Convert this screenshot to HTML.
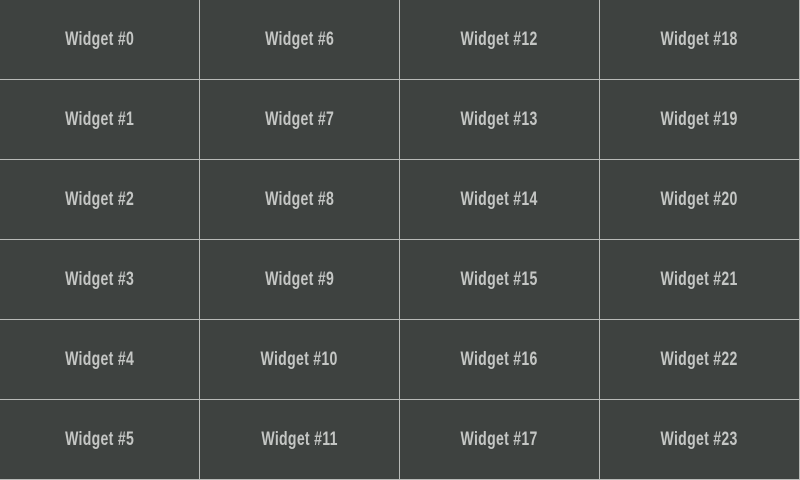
<!DOCTYPE html>
<html><head><style>
html,body{margin:0;padding:0;background:#3e4240;width:800px;height:480px;overflow:hidden}
.g{position:relative;width:800px;height:480px}
.c{position:absolute;width:199px;height:79px;display:flex;align-items:center;justify-content:center}
.c span{font-family:"Liberation Sans",sans-serif;font-size:19px;font-weight:bold;color:#c4c6c4;transform:scaleX(0.74);display:inline-block;white-space:nowrap;letter-spacing:0.4px}
.v{position:absolute;top:0;width:1px;height:480px;background:#b8bab8}
.h{position:absolute;left:0;height:1px;width:800px;background:#b8bab8}
</style></head><body><div class="g">
<div class="v" style="left:199px"></div><div class="v" style="left:399px"></div><div class="v" style="left:599px"></div><div class="v" style="left:799px"></div>
<div class="h" style="top:79px"></div><div class="h" style="top:159px"></div><div class="h" style="top:239px"></div><div class="h" style="top:319px"></div><div class="h" style="top:399px"></div><div class="h" style="top:479px"></div>
<script>
for(let col=0;col<4;col++)for(let r=0;r<6;r++){const d=document.createElement('div');d.className='c';d.style.left=(col*200)+'px';d.style.top=(r*80)+'px';d.innerHTML='<span>Widget #'+(col*6+r)+'</span>';document.querySelector('.g').appendChild(d);}
</script>
</div></body></html>
